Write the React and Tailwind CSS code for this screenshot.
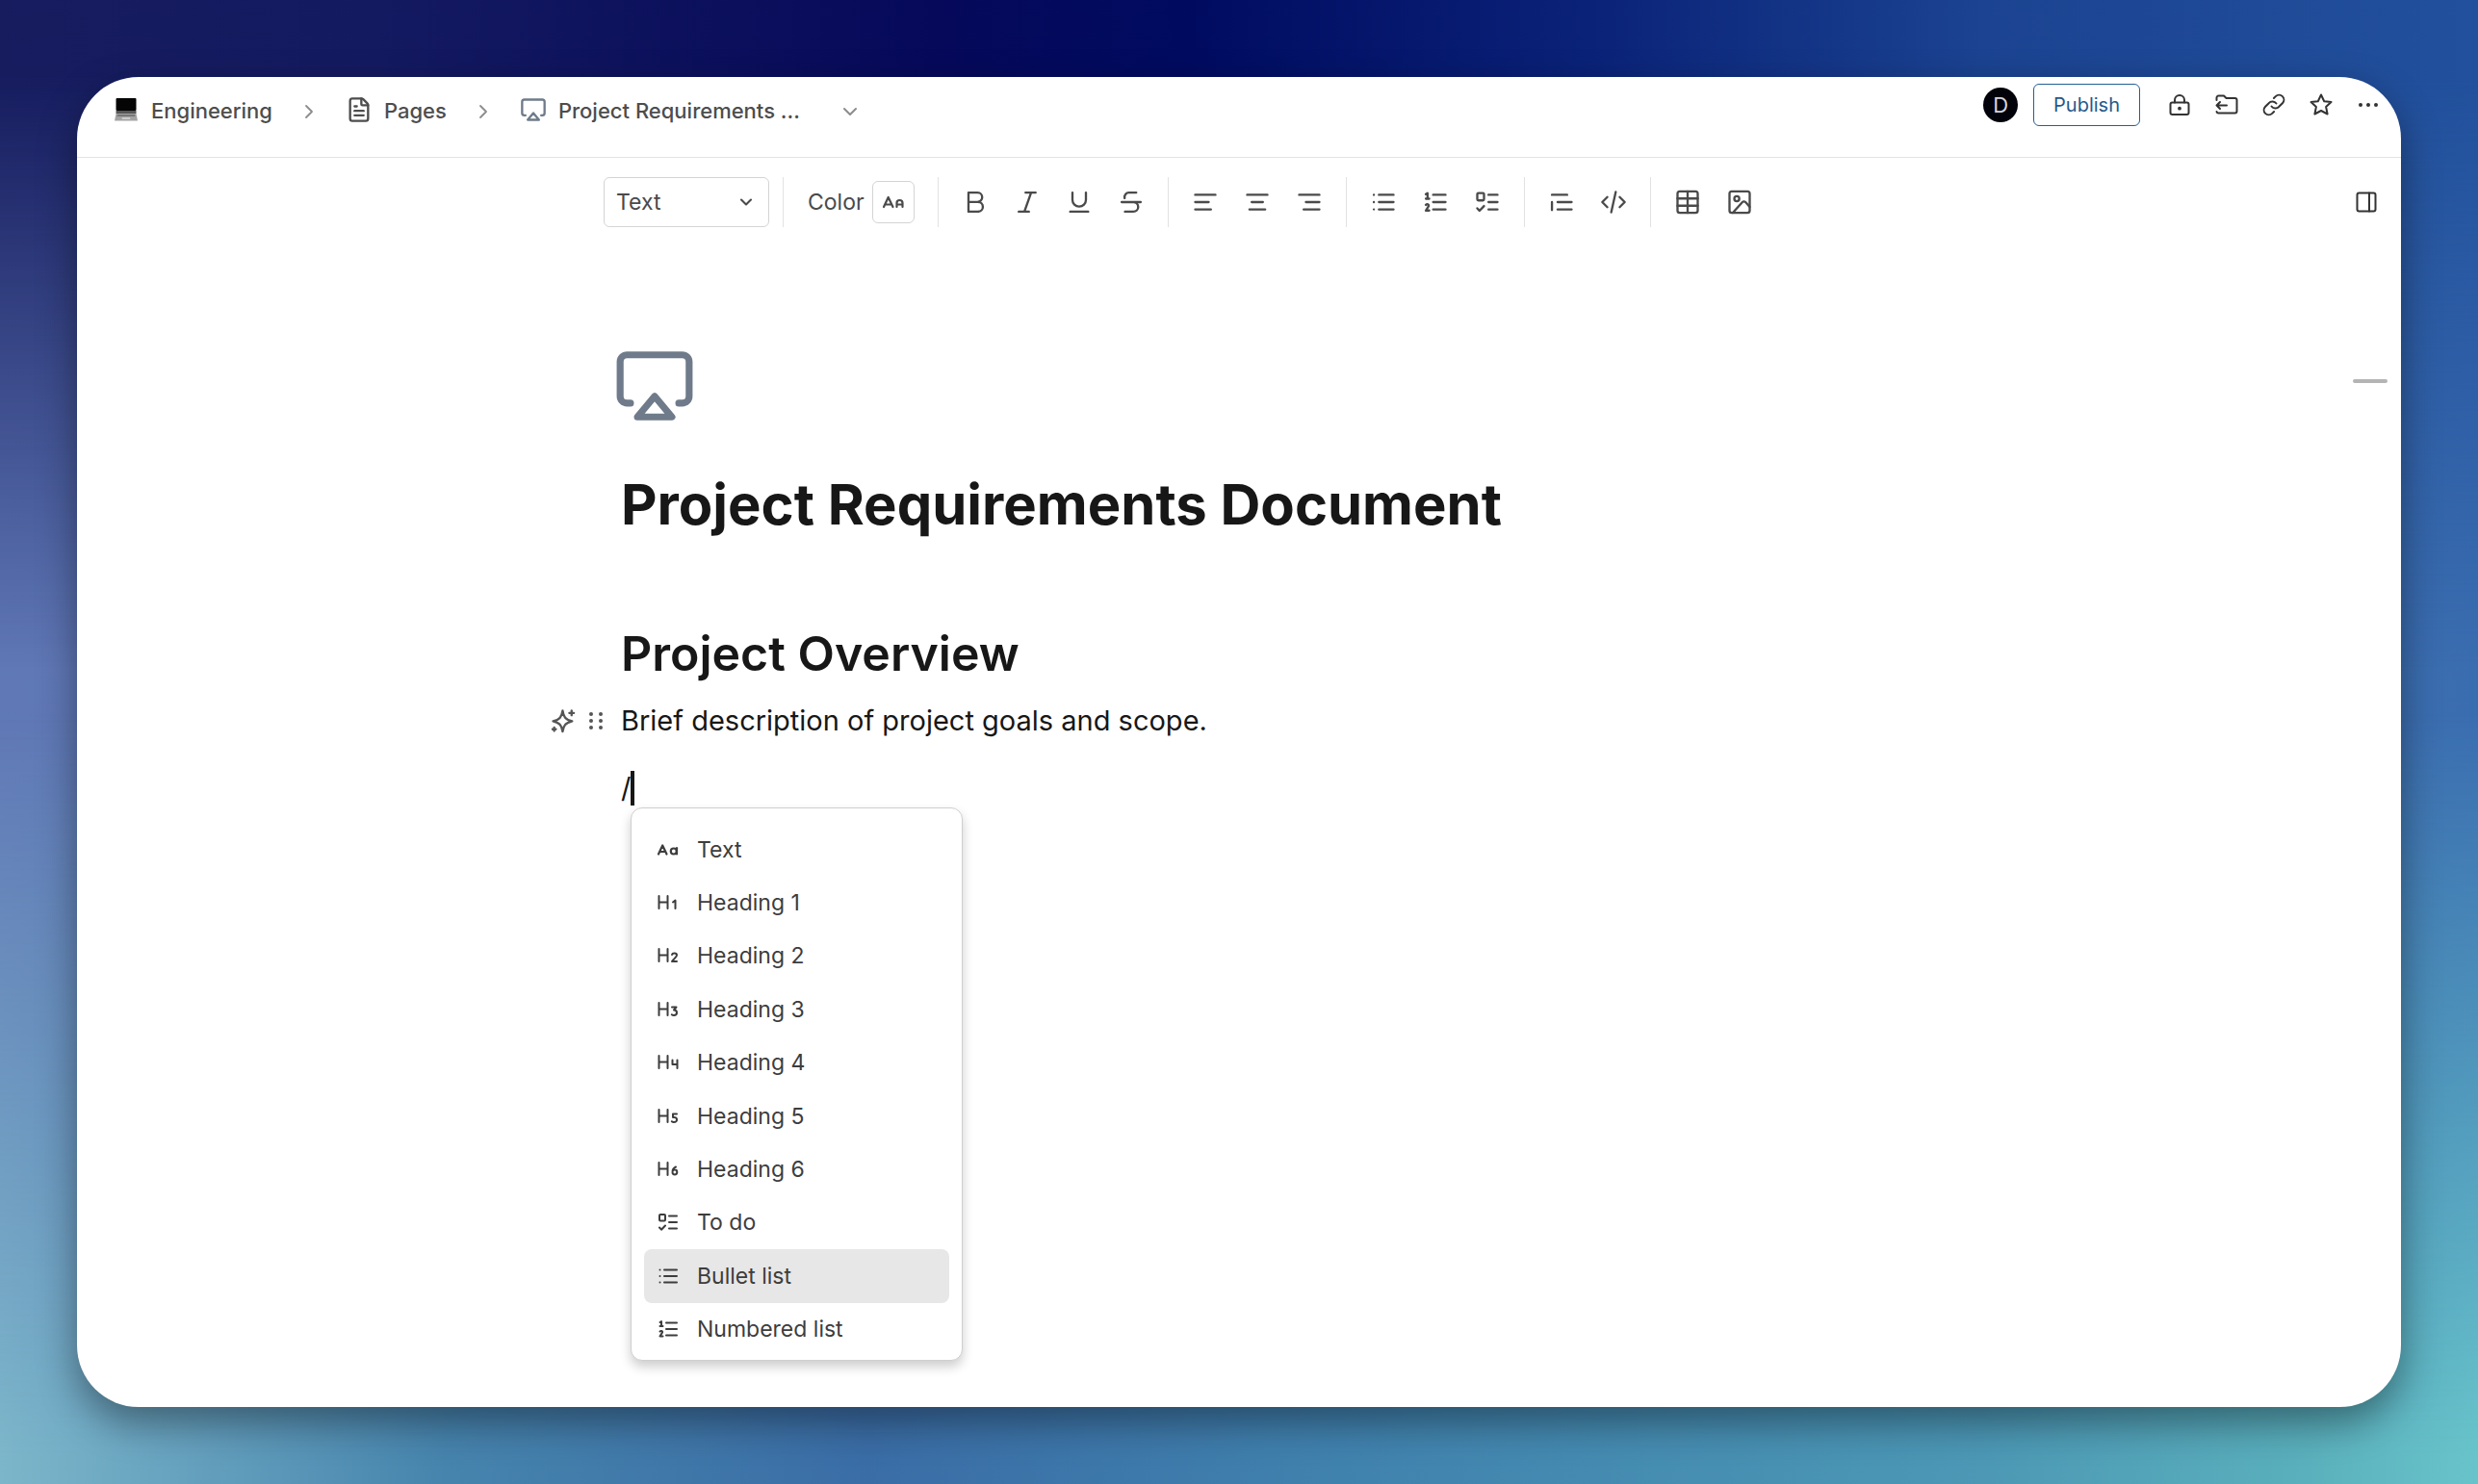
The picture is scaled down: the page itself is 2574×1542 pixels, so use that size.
import React, { useState } from "react";
import { Airplay, ChevronDown, ChevronRight, FileText } from "lucide-react";

// Shared wrapper for the small line icons
const Icon = ({ children, className = "size-7", stroke = 2 }) => (
  <svg
    viewBox="0 0 24 24"
    fill="none"
    stroke="currentColor"
    strokeWidth={stroke}
    strokeLinecap="round"
    strokeLinejoin="round"
    className={className}
    aria-hidden="true"
  >
    {children}
  </svg>
);

const paths = {
  bold: <path d="M6 3.500h8a4.200 4.200 0 0 1 0 8.400H6zM6 11.900h8.500a4.300 4.300 0 0 1 0 8.600H6z" />,
  italic: <path d="M10.500 3.500h9M4.500 20.500h9M15.500 3.500l-6 17" />,
  underline: <path d="M6 3.500v6.500a6 6 0 0 0 12 0V3.500M4 20.500h16" />,
  strike: <path d="M16.500 3.500H10a4 4 0 0 0-3.800 5M3.500 12h17M14 12a4.200 4.200 0 0 1 0 8.500H6.500" />,
  left: <path d="M3 5.500h18M3 12h12M3 18.500h14" />,
  center: <path d="M3 5.500h18M7 12h10M5 18.500h14" />,
  right: <path d="M3 5.500h18M9 12h12M7 18.500h14" />,
  bullet: <path d="M8 5.500h13M8 12h13M8 18.500h13M3.500 5.500v.01M3.500 12v.01M3.500 18.500v.01" />,
  numbered: (
    <>
      <path d="M10 5.500h11M10 12h11M10 18.500h11" />
      <path d="M3.500 5l1.500-1v5M3.500 9h3M3.500 14.500c1-1 3-.5 2.500 1L3.500 19.500h3" />
    </>
  ),
  todo: (
    <>
      <rect x="3" y="4" width="6" height="6.500" rx="1" />
      <path d="M13 5.500h8M13 12h8M13 18.500h8M3 17.500l2 2.200L9 15.500" />
    </>
  ),
  quote: <path d="M3.500 5.500h13.500M8.500 12H21M8.500 18.500H21M3.500 12v7" />,
  code: <path d="M6.500 7.500L2 12l4.500 4.500M17.500 7.500L22 12l-4.500 4.500M14 3l-4 18" />,
  table: (
    <>
      <rect x="3" y="2.500" width="18" height="19" rx="2" />
      <path d="M3 8.800h18M3 15.200h18M12 2.500v19" />
    </>
  ),
  image: (
    <>
      <rect x="3" y="2.500" width="18" height="19" rx="2" />
      <circle cx="9.500" cy="9" r="2.200" />
      <path d="M6 21.500l8.500-9.500a2 2 0 0 1 3 .2l3.500 4" />
    </>
  ),
  lock: (
    <>
      <rect x="2.500" y="9.500" width="19" height="12.500" rx="2" />
      <path d="M7 9.500V7a5 5 0 0 1 10 0v2.500" />
      <circle cx="12" cy="15.700" r=".9" />
    </>
  ),
  move: <path d="M1.500 7V4.500a2 2 0 0 1 2-2H9l2.500 2.500h9a2 2 0 0 1 2 2V18.500a2 2 0 0 1-2 2h-17a2 2 0 0 1-2-1.500M12 12.500H1.500M5 9l-3.500 3.500L5 16" />,
  link: (
    <>
      <path d="M9.500 13.500a5 5 0 0 0 7.800.3l3.600-3.600a5 5 0 0 0-7.100-7.100l-1.900 1.900" />
      <path d="M14.500 10.500a5 5 0 0 0-7.800-.3l-3.600 3.600a5 5 0 0 0 7.100 7.100l1.900-1.900" />
    </>
  ),
  star: <path d="M12 1.500l3.200 6.700 7.300.9-5.400 4.900 1.500 7.500-6.600-3.500-6.600 3.500L6.900 14 1.500 9.100l7.300-.9z" />,
  more: (
    <g fill="currentColor" stroke="none">
      <circle cx="4" cy="12" r="2" />
      <circle cx="12" cy="12" r="2" />
      <circle cx="20" cy="12" r="2" />
    </g>
  ),
  panel: (
    <>
      <rect x="2.500" y="2.500" width="19" height="19" rx="2" />
      <path d="M15 2.500v19" />
    </>
  ),
  sparkle: (
    <>
      <path d="M11.500 3c.8 5.500 2.500 8 8.500 9.300-6 1.500-7.700 3.700-8.500 9.200-.8-5.500-2.500-7.700-8.500-9.200 6-1.300 7.700-3.800 8.500-9.300z" />
      <path d="M19.500 3v4M17.500 5h4M4 18v3M2.500 19.500h3" />
    </>
  ),
  grip: (
    <g fill="currentColor" stroke="none">
      <circle cx="7" cy="5" r="2" />
      <circle cx="7" cy="12" r="2" />
      <circle cx="7" cy="19" r="2" />
      <circle cx="17" cy="5" r="2" />
      <circle cx="17" cy="12" r="2" />
      <circle cx="17" cy="19" r="2" />
    </g>
  ),
};

const toolGroups = [
  [["Bold", "bold"], ["Italic", "italic"], ["Underline", "underline"], ["Strikethrough", "strike"]],
  [["Align left", "left"], ["Align center", "center"], ["Align right", "right"]],
  [["Bullet list", "bullet"], ["Numbered list", "numbered"], ["To do", "todo"]],
  [["Quote", "quote"], ["Code", "code"]],
  [["Table", "table"], ["Image", "image"]],
];

const headerActions = [
  ["Lock", "lock"],
  ["Move", "move"],
  ["Copy link", "link"],
  ["Favorite", "star"],
  ["More", "more"],
];

// Second glyph of the heading icons, drawn right of the H
const digits = {
  1: <path d="M17 11.500l2.500-2v8.500" />,
  2: <path d="M16 11c.5-2 5-2 5 .5 0 2-3 3.500-5 6.500h5" />,
  3: <path d="M16 9.500h4.500L18 12.500c4 0 4 5.500 0 5.500-1 0-1.700-.3-2.200-.8" />,
  4: <path d="M16.500 9.500V14h5M21.500 9.500v8.500" />,
  5: <path d="M21 9.500h-4V13c5-1 5.500 5 1 5-1 0-1.700-.3-2.200-.8" />,
  6: <path d="M20 9.500c-2 1-3.500 3.500-3.500 5.500a2.400 2.400 0 1 0 2.400-2.400c-1.200 0-2 .6-2.400 1.600" />,
};

const menuItems = [
  { label: "Text", icon: "Aa" },
  { label: "Heading 1", digit: 1 },
  { label: "Heading 2", digit: 2 },
  { label: "Heading 3", digit: 3 },
  { label: "Heading 4", digit: 4 },
  { label: "Heading 5", digit: 5 },
  { label: "Heading 6", digit: 6 },
  { label: "To do", icon: "todo" },
  { label: "Bullet list", icon: "bullet" },
  { label: "Numbered list", icon: "numbered" },
];

const TextSizeIcon = () => (
  <Icon className="size-6" stroke={2.2}>
    <path d="M2 16.500L6.200 7.500l4.300 9M3.500 14h5.500" />
    <circle cx="17.800" cy="13.500" r="3" />
    <path d="M21 10.200v6.300" />
  </Icon>
);

const ColorIcon = () => (
  <Icon className="size-6" stroke={2.2}>
    <path d="M2 17L6.700 7l4.800 10M3.500 14.500h6M15.500 17v-4a3 3 0 0 1 6 0v4M15.500 14.500h6" />
  </Icon>
);

const Laptop = () => (
  <svg viewBox="0 0 24 24" className="size-6" aria-hidden="true">
    <rect x="1.500" y="0" width="21" height="13" rx="1" fill="#050505" />
    <path d="M1.500 13h21v3h-21z" fill="#555" />
    <path d="M1.500 16h21l1.500 7.500H0z" fill="#a3a3a3" />
    <path d="M3 17h18l.5 2h-19z" fill="#777" />
    <path d="M8 20h8l.5 2h-9z" fill="#ccc" />
  </svg>
);

const MenuIcon = ({ item }) => {
  if (item.digit) {
    return (
      <Icon className="size-6">
        <path d="M2.500 5v13M11.500 5v13M2.500 11.500h9" />
        {digits[item.digit]}
      </Icon>
    );
  }
  if (item.icon === "Aa") return <TextSizeIcon />;
  return <Icon className="size-6">{paths[item.icon]}</Icon>;
};

const Header = () => (
  <header className="flex h-[84px] items-start justify-between border-b border-[#e2e2e2] pr-2.5 pl-[39px]">
    <nav aria-label="Breadcrumb" className="flex h-[71px] items-center text-[22px] font-medium text-[#4d4d4d]">
      <a href="#engineering" className="flex items-center gap-3.5">
        <span className="pb-1">
          <Laptop />
        </span>
        Engineering
      </a>
      <ChevronRight className="mx-[26px] size-6 text-[#8c8c8c]" strokeWidth={1.8} />
      <a href="#pages" className="flex items-center gap-3">
        <FileText className="mb-1 size-7" strokeWidth={2} />
        Pages
      </a>
      <ChevronRight className="mx-[26px] size-6 text-[#8c8c8c]" strokeWidth={1.8} />
      <a href="#document" className="flex items-center gap-3">
        <Airplay className="mb-1 size-7 text-[#6f7b8a]" strokeWidth={2} />
        Project Requirements ...
      </a>
      <button type="button" aria-label="Page menu" className="ml-10">
        <ChevronDown className="size-6 text-[#8c8c8c]" strokeWidth={2} />
      </button>
    </nav>
    <div className="flex h-[58px] items-center text-[#333]">
      <span className="mr-4 flex size-9 items-center justify-center rounded-full bg-[#02020a] text-[22px] text-[#d5d5e0]">
        D
      </span>
      <button
        type="button"
        className="mr-4 h-11 rounded-md border border-[#245f94] px-5 text-xl text-[#245a8c]"
      >
        Publish
      </button>
      {headerActions.map(([label, icon]) => (
        <button key={label} type="button" aria-label={label} className="flex w-[49px] justify-center">
          <Icon className="size-6">{paths[icon]}</Icon>
        </button>
      ))}
    </div>
  </header>
);

const Toolbar = () => (
  <div className="flex items-center px-6 pt-5 text-[#4a4a4a]">
    <div className="ml-[523px] flex h-[52px] items-center">
      <div className="relative mr-3.5">
        <select
          aria-label="Block style"
          className="h-[52px] w-[172px] appearance-none rounded-md border border-[#d4d4d4] bg-white pl-3 text-[23px]"
        >
          <option>Text</option>
          <option>Heading 1</option>
        </select>
        <ChevronDown className="pointer-events-none absolute top-4 right-3.5 size-5" strokeWidth={2.5} />
      </div>
      <div className="flex h-full items-center border-l border-[#e2e2e2] pr-6 pl-[25px] text-[23px]">
        <span className="mr-2">Color</span>
        <button
          type="button"
          aria-label="Text color"
          className="flex h-11 w-11 items-center justify-center rounded-md border border-[#d4d4d4]"
        >
          <ColorIcon />
        </button>
      </div>
      {toolGroups.map((group) => (
        <div key={group[0][0]} className="flex h-full items-center border-l border-[#e2e2e2] px-[11px]">
          {group.map(([label, icon]) => (
            <button key={label} type="button" aria-label={label} className="flex w-[54px] justify-center">
              <Icon>{paths[icon]}</Icon>
            </button>
          ))}
        </div>
      ))}
    </div>
    <button type="button" aria-label="Toggle side panel" className="ml-auto text-[#333]">
      <Icon className="size-6">{paths.panel}</Icon>
    </button>
  </div>
);

const SlashMenu = ({ active, onHover }) => (
  <ul className="absolute top-full left-2.5 -mt-0.5 grid h-[575px] w-[345px] grid-rows-10 rounded-xl border border-[#cfcfcf] bg-white px-[13px] pt-[15px] pb-1 text-[23px] text-[#3d3d3d] shadow-[0_6px_12px_rgba(0,0,0,0.2)]">
    {menuItems.map((item) => (
      <li key={item.label}>
        <button
          type="button"
          onMouseEnter={() => onHover(item.label)}
          className={
            active === item.label
              ? "flex h-full w-full items-center gap-[18px] rounded-lg bg-[#e7e7e7] px-[13px]"
              : "flex h-full w-full items-center gap-[18px] rounded-lg px-[13px]"
          }
        >
          <MenuIcon item={item} />
          {item.label}
        </button>
      </li>
    ))}
  </ul>
);

// Wallpaper: three horizontal blends, the top and bottom ones fade toward the middle
const Wallpaper = () => (
  <div aria-hidden="true" className="absolute inset-0 -z-10 bg-linear-to-r from-[#6078b6] to-[#3a6db0]">
    <div className="absolute inset-0 bg-[linear-gradient(to_right,#161c5e,#141a60_15%,#06095a_38%,#000b60_48%,#0a2278_64%,#1b4391_80%,#22509c)] mask-[linear-gradient(to_bottom,black_5%,transparent_45%)]" />
    <div className="absolute inset-0 bg-[linear-gradient(to_right,#7cb6ca,#4684ad_18%,#3a6da6_35%,#4082ae_54%,#4c98b5_80%,#5ab0bc_93%,#68c4ca)] mask-[linear-gradient(to_top,black_2%,transparent_52%)]" />
  </div>
);

const App = () => {
  const [active, setActive] = useState("Bullet list");

  return (
    <div className="relative isolate flex min-h-screen p-20 font-['Inter',sans-serif] antialiased">
      <Wallpaper />
      <div className="flex-1 rounded-[64px] bg-white shadow-[0_16px_40px_rgba(0,0,0,0.4)]">
        <Header />
        <Toolbar />
        <main className="relative pt-[122px] pl-[565px] text-[#171717]">
          <span className="absolute top-[158px] right-3.5 h-1 w-9 rounded-full bg-[#b4b4b4]" />
          <Airplay className="-ml-2 size-[86px] text-[#6f7b8a]" strokeWidth={2} />
          <h1 className="mt-11 text-[58px] leading-[72px] font-bold">Project Requirements Document</h1>
          <h2 className="mt-[83px] text-[50px] leading-[72px] font-semibold">Project Overview</h2>
          <div className="relative mt-3">
            <div className="absolute top-2 right-full flex items-center gap-2 pr-3.5 text-[#555]">
              <button type="button" aria-label="Ask AI">
                <Icon className="size-7">{paths.sparkle}</Icon>
              </button>
              <button type="button" aria-label="Drag block">
                <Icon className="size-6">{paths.grip}</Icon>
              </button>
            </div>
            <p className="text-[29px] leading-[44px]">Brief description of project goals and scope.</p>
          </div>
          <div className="relative mt-[26px] flex w-fit items-center text-[29px] leading-[44px]">
            <span>/</span>
            <span className="h-9 w-1 bg-[#171717]" />
            <SlashMenu active={active} onHover={setActive} />
          </div>
        </main>
      </div>
    </div>
  );
};

export default App;
